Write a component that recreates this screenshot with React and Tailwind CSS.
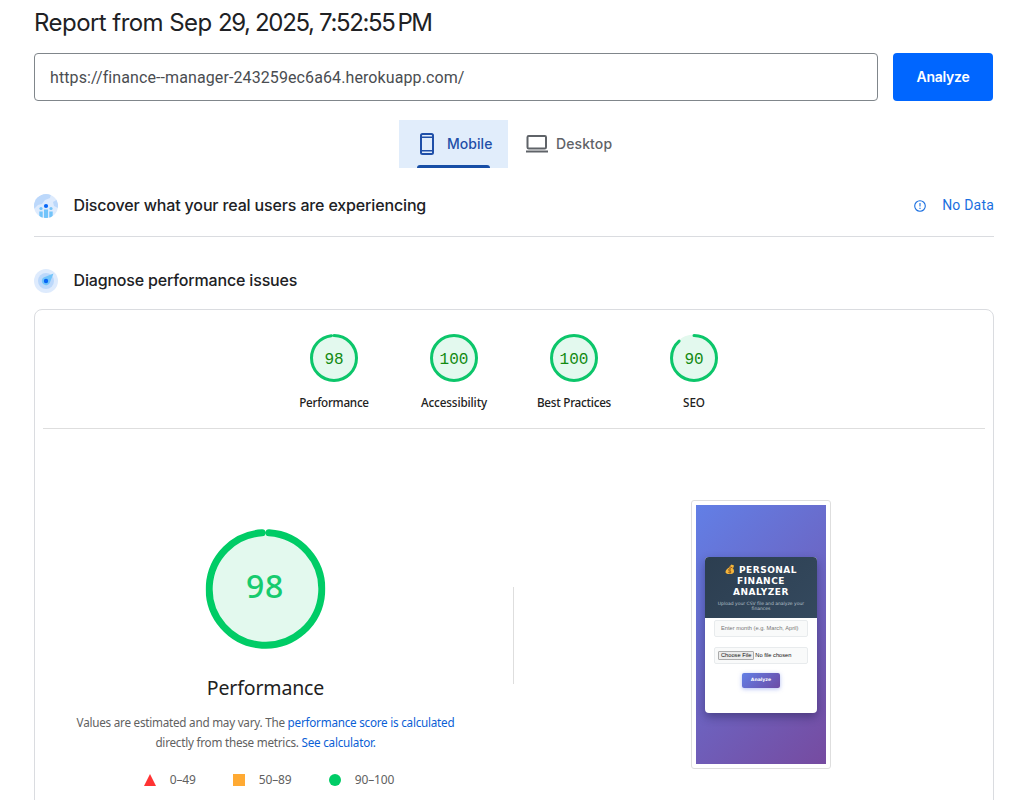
const HEAD = "font-['Google_Sans','Inter',sans-serif]";

function Gauge({ score, label, arc, spacing }) {
  return (
    <div className="flex w-[120px] flex-col items-center">
      <div className="grid size-12 place-items-center">
        <svg viewBox="0 0 48 48" className="col-start-1 row-start-1 size-12">
          <circle cx="24" cy="24" r="23.5" fill="#e3f9ee" />
          <circle
            cx="24" cy="24" r="22.5" fill="none" stroke="#0cc66a" strokeWidth="3" strokeLinecap="round"
            pathLength="100" strokeDasharray={arc} transform="rotate(-90 24 24)"
          />
        </svg>
        <span className="col-start-1 row-start-1 mt-[3px] font-['Liberation_Mono',monospace] text-base leading-4 text-[#128a12]">{score}</span>
      </div>
      <div className={"mt-[11px] whitespace-nowrap font-['Noto_Sans',sans-serif] text-[11.7px] leading-[18px] font-medium text-[#212121] " + spacing}>{label}</div>
    </div>
  );
}

function MoneyBag() {
  return (
    <svg viewBox="0 0 20 20" className="mr-[4px] inline-block size-[10px] align-[-1px]">
      <path d="M9 5 13 1l5 2-1 4-3 2z" fill="#f4b73b" />
      <path d="M10 6c-5 2-9 6-9 10 0 3 3 4 8 4s9-1 9-5c0-4-2-7-4-8z" fill="#f5b63c" />
      <path d="m9 5 6 3" stroke="#a45e20" strokeWidth="2" />
      <path d="M12 10c-3-1-5 0-5 2 0 3 5 1 5 4 0 2-4 2-6 0M10 9v10" fill="none" stroke="#875019" strokeWidth="1.5" />
    </svg>
  );
}

function PagePreview() {
  return (
    <div className="mt-[71px] h-[269px] w-[140px] rounded-[3px] border border-[#dedede] p-1">
      <div className="flex h-[259px] w-[130px] flex-col items-center bg-[linear-gradient(135deg,#627fe6_0%,#764ba0_100%)] pt-[52px]">
        <div className="flex h-[156px] w-[112px] flex-col items-center overflow-hidden rounded-[4px] bg-white shadow-[0_4px_10px_rgba(20,20,60,0.4)]">
          <div className="h-[61px] w-full bg-[linear-gradient(135deg,#2c3e50,#34495e)] pt-[7px] text-center text-white">
            <div className="font-['DejaVu_Sans',sans-serif] text-[9px] leading-[11px] font-bold tracking-[0.5px]">
              <div className="whitespace-nowrap"><MoneyBag />PERSONAL</div>
              <div>FINANCE</div>
              <div>ANALYZER</div>
            </div>
            <div className="mt-[3px] font-['DejaVu_Sans',sans-serif] text-[4.5px] leading-[5px] text-[#b6c1ca]">
              Upload your CSV file and analyze your<br />finances
            </div>
          </div>
          <div className="mt-[2px] flex h-[17px] w-[94px] items-center rounded-[2px] border border-[#e8ebed] bg-[#f9fafa] pl-[6px] font-['Liberation_Sans',sans-serif] text-[5.7px] whitespace-nowrap text-[#777]">
            Enter month (e.g. March, April)
          </div>
          <div className="mt-[10px] flex h-[17px] w-[94px] items-center rounded-[2px] border border-[#e8ebed] bg-[#f9fafa] pl-[3px] font-['Liberation_Sans',sans-serif] text-[5.7px] whitespace-nowrap text-[#111]">
            <span className="flex h-[9px] items-center rounded-[1px] border border-[#aaa] bg-[#ececec] px-[2px]">Choose File</span>
            <span className="ml-[1px]">No file chosen</span>
          </div>
          <div className="mt-[9px] flex h-[15px] w-[38px] items-center justify-center rounded-[2px] bg-[linear-gradient(135deg,#627fe6,#6d4ba5)] font-['DejaVu_Sans',sans-serif] text-[4.6px] font-bold text-white shadow-[0_1px_4px_rgba(102,126,234,0.5)]">
            Analyze
          </div>
        </div>
      </div>
    </div>
  );
}

export default function App() {
  return (
    <div className="h-[800px] w-full overflow-hidden bg-white">
      <main className="ml-[34px] w-[960px]">
        <h1 className={HEAD + " pt-[7px] text-2xl leading-8 tracking-[-0.55px] whitespace-nowrap text-[#202124]"}>
          Report from Sep <span className="tracking-[-1.35px]">29, 2025, 7:52:55</span><span className="ml-[3px] tracking-[-1.6px]">PM</span>
        </h1>
        <div className="mt-[14px] flex gap-[15px]">
          <div className="flex h-12 w-[844px] items-center rounded-[4px] border border-[#80868b] px-[15px] pt-[2px] font-['Roboto',sans-serif] text-base tracking-[0.1px] text-[#4a4d51]">
            https://finance--manager-243259ec6a64.herokuapp.com/
          </div>
          <button className={HEAD + " h-12 w-[100px] rounded-[4px] bg-[#0066ff] text-sm font-semibold tracking-[-0.25px] text-white"}>Analyze</button>
        </div>
        <div className={HEAD + " mt-[19px] ml-[365px] flex h-12 text-sm font-medium"}>
          <div className="flex w-[109px] flex-col bg-[#e1edfb] text-[#1f4fa8]">
            <div className="flex h-[45px] items-center pt-[3px] pl-[20px]">
              <svg viewBox="0 0 16 22" className="h-[22px] w-[16px]" fill="none" stroke="currentColor" strokeWidth="2">
                <rect x="2" y="1" width="12" height="20" rx="1.5" />
                <path d="M2 4.2h12M2 17.8h12" strokeWidth="1.6" />
              </svg>
              <span className="ml-[12px] tracking-[0.05px]">Mobile</span>
            </div>
            <div className="ml-[18px] h-[3px] w-[73px] rounded-t-[3px] bg-[#174ea6]" />
          </div>
          <div className="flex items-center pl-[17px] text-[#5f6368]">
            <svg viewBox="0 0 24 18" className="h-[18px] w-[24px]" fill="none" stroke="currentColor" strokeWidth="2">
              <rect x="2.5" y="1" width="18.5" height="12.5" rx="1.2" />
              <path d="M1 16.5h22" />
            </svg>
            <span className="ml-[7px] tracking-[0.1px]">Desktop</span>
          </div>
        </div>
        <div className="mt-[7px] flex h-[62px] items-center border-b border-[#dadce0]">
          <svg viewBox="0 0 24 24" className="size-6">
            <defs><clipPath id="users"><circle cx="12" cy="12" r="12" /></clipPath></defs>
            <g clipPath="url(#users)">
              <path d="M0 0h24v24H0z" fill="#deebfd" />
              <path d="M2 4 9 0h8l-1 4-5 2-3 4-4 1-4 4V6zM19 8l5-3v9l-4-2z" fill="#bcd8fb" />
              <circle cx="7" cy="14.5" r="1.6" fill="#72c4fa" />
              <circle cx="17" cy="14.5" r="1.6" fill="#72c4fa" />
              <path d="M5.3 17.5h3.4V24H5.3zM10 15.5h4V24h-4zM15.3 17.5h3.4V24h-3.4z" fill="#72c4fa" />
              <circle cx="12" cy="12" r="2.1" fill="#0866f5" />
            </g>
          </svg>
          <h2 className={HEAD + " mb-[2px] ml-[15.5px] text-base font-medium tracking-[-0.15px] text-[#202124]"}>Discover what your real users are experiencing</h2>
          <div className="ml-auto flex items-center text-[#1a6fe0]">
            <svg viewBox="0 0 12 12" className="size-3" fill="none" stroke="currentColor" strokeWidth="1.1">
              <circle cx="6" cy="6" r="5.3" /><path d="M6 3v3.6M6 7.7v1.2" />
            </svg>
            <span className="mb-[2px] ml-[16px] font-['Roboto',sans-serif] text-sm tracking-[0.2px]">No Data</span>
          </div>
        </div>
        <div className="mt-[28px] flex h-[32px] items-center">
          <svg viewBox="0 0 24 24" className="size-6">
            <circle cx="12" cy="12" r="12" fill="#deebfd" />
            <circle cx="12" cy="12" r="8" fill="#bcd8fb" />
            <path d="M19.5 4.5 15.6 14.2A4.2 4.2 0 1 1 9.6 8.6z" fill="#72c4fa" />
            <circle cx="12" cy="12" r="2.2" fill="#0866f5" />
          </svg>
          <h2 className={HEAD + " mb-[2px] ml-[15.5px] text-base font-medium tracking-[-0.17px] text-[#202124]"}>Diagnose performance issues</h2>
        </div>
        <section className="mt-[12px] h-[520px] rounded-lg border border-[#dadce0] px-2">
          <div className="flex h-[119px] justify-center border-b border-[#dedede] pt-[24px]">
            <Gauge score="98" label="Performance" arc="98 2" spacing="tracking-[-0.27px]" />
            <Gauge score="100" label="Accessibility" arc="100 0" spacing="tracking-[-0.12px]" />
            <Gauge score="100" label="Best Practices" arc="100 0" spacing="tracking-[-0.25px]" />
            <Gauge score="90" label="SEO" arc="88.5 11.5" spacing="tracking-[-0.1px]" />
          </div>
          <div className="flex">
            <div className="flex w-[445px] flex-col items-center pt-[100px] font-['Noto_Sans',sans-serif]">
              <div className="grid size-[120px] -translate-x-[0.5px] place-items-center">
                <svg viewBox="0 0 120 120" className="col-start-1 row-start-1 size-[120px]">
                  <circle cx="60" cy="60" r="58" fill="#e3f9ee" />
                  <circle cx="60" cy="60" r="56.3" fill="none" stroke="#00cc66" strokeWidth="7" strokeLinecap="round" pathLength="100" strokeDasharray="98 2" transform="rotate(-86.4 60 60)" />
                </svg>
                <span className="col-start-1 row-start-1 -mt-[7px] font-['Noto_Sans',sans-serif] text-[32px] leading-8 font-medium tracking-[0.8px] text-[#16cb6e]">98</span>
              </div>
              <div className="mt-[25px] text-[19.5px] leading-7 tracking-[-0.15px] text-[#212121]">Performance</div>
              <div className="mt-[10px] text-center text-[11.7px] leading-5 tracking-[-0.24px] whitespace-nowrap text-[#616161]">
                <div>Values are estimated and may vary. The <a className="text-[#0b5fd6]">performance score is calculated</a></div>
                <div>directly from these metrics. <a className="text-[#0b5fd6]">See calculator.</a></div>
              </div>
              <div className="mt-[18px] ml-[7px] flex text-xs leading-5 tracking-[-0.15px] text-[#616161]">
                <div className="flex w-[89px] items-center gap-[14px]"><svg viewBox="0 0 12 12" className="size-3"><path d="M6 0 12 12H0z" fill="#ff3333" /></svg>0–49</div>
                <div className="flex w-[96px] items-center gap-[14px]"><span className="size-3 bg-[#ffaa33]" />50–89</div>
                <div className="flex items-center gap-[14px]"><span className="size-3 rounded-full bg-[#00cc66]" />90–100</div>
              </div>
            </div>
            <div className="mt-[158px] ml-[25px] h-[97px] w-px bg-[#dedede]" />
            <div className="ml-[177px]"><PagePreview /></div>
          </div>
        </section>
      </main>
    </div>
  );
}
